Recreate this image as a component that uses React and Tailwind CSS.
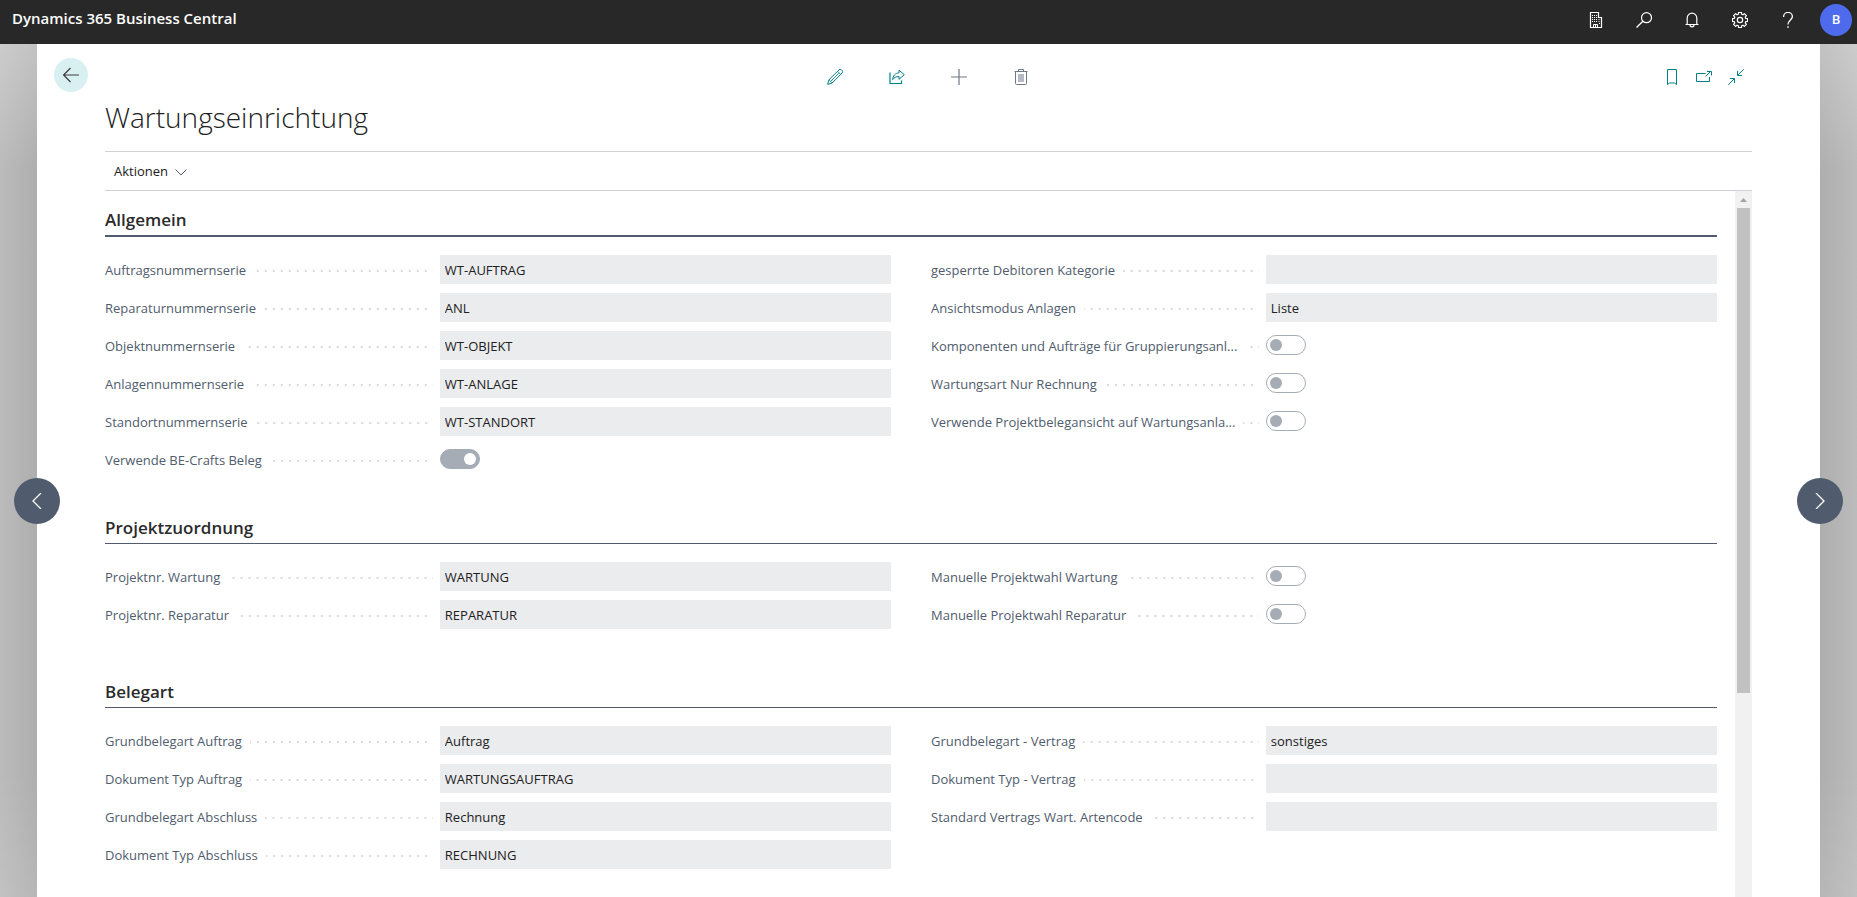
import React, { useState } from 'react';

const sections = [
  {
    title: 'Allgemein',
    headClass: 'border-b-2',
    bodyClass: 'pb-[25px]',
    left: [
      { label: 'Auftragsnummernserie', value: 'WT-AUFTRAG' },
      { label: 'Reparaturnummernserie', value: 'ANL' },
      { label: 'Objektnummernserie', value: 'WT-OBJEKT' },
      { label: 'Anlagennummernserie', value: 'WT-ANLAGE' },
      { label: 'Standortnummernserie', value: 'WT-STANDORT' },
      { label: 'Verwende BE-Crafts Beleg', toggle: true, on: true },
    ],
    right: [
      { label: 'gesperrte Debitoren Kategorie', value: '' },
      { label: 'Ansichtsmodus Anlagen', value: 'Liste' },
      { label: 'Komponenten und Aufträge für Gruppierungsanl...', toggle: true },
      { label: 'Wartungsart Nur Rechnung', toggle: true },
      { label: 'Verwende Projektbelegansicht auf Wartungsanla...', toggle: true },
    ],
  },
  {
    title: 'Projektzuordnung',
    headClass: 'border-b',
    bodyClass: 'pb-[34px]',
    left: [
      { label: 'Projektnr. Wartung', value: 'WARTUNG' },
      { label: 'Projektnr. Reparatur', value: 'REPARATUR' },
    ],
    right: [
      { label: 'Manuelle Projektwahl Wartung', toggle: true },
      { label: 'Manuelle Projektwahl Reparatur', toggle: true },
    ],
  },
  {
    title: 'Belegart',
    headClass: 'border-b',
    bodyClass: 'pb-[34px]',
    left: [
      { label: 'Grundbelegart Auftrag', value: 'Auftrag' },
      { label: 'Dokument Typ Auftrag', value: 'WARTUNGSAUFTRAG' },
      { label: 'Grundbelegart Abschluss', value: 'Rechnung' },
      { label: 'Dokument Typ Abschluss', value: 'RECHNUNG' },
    ],
    right: [
      { label: 'Grundbelegart - Vertrag', value: 'sonstiges' },
      { label: 'Dokument Typ - Vertrag', value: '' },
      { label: 'Standard Vertrags Wart. Artencode', value: '' },
    ],
  },
];

const Icon = ({ children, size = 16, className = '' }) => (
  <svg
    width={size}
    height={size}
    viewBox={`0 0 ${size} ${size}`}
    fill="none"
    stroke="currentColor"
    strokeWidth="1"
    className={className}
    aria-hidden="true"
  >
    {children}
  </svg>
);

const BuildingIcon = () => (
  <Icon>
    <path d="M2.5 15.5V.5h8v5h3v10z" strokeWidth="1.2" />
    <path d="M5.5 15.5v-3h4v3M7.5 12.5v3" />
    <path d="M4 3.5h1M6 3.5h1M8 3.5h1M4 5.5h1M6 5.5h1M8 5.5h1M4 7.5h1M6 7.5h1M8 7.5h1M10.5 7.5h1M4 9.5h1M6 9.5h1M8 9.5h1M10.5 9.5h1M11 11.5h1" strokeWidth="1.2" />
  </Icon>
);

const SearchIcon = () => (
  <Icon>
    <circle cx="10.5" cy="5.7" r="5" strokeWidth="1.2" />
    <path d="M6.9 9.3.5 15.5" strokeWidth="1.3" />
  </Icon>
);

const BellIcon = () => (
  <Icon>
    <path d="M1.5 12.5h13M3.2 12.5V6a4.8 4.8 0 0 1 9.6 0v6.5" strokeWidth="1.2" />
    <path d="M6 12.8a2 2 0 0 0 4 0" strokeWidth="1.2" />
  </Icon>
);

const gearPath = () => {
  const pts = [];
  for (let i = 0; i < 8; i++) {
    const a = (i * Math.PI) / 4;
    [[-0.27, 6], [-0.19, 7.7], [0.19, 7.7], [0.27, 6]].forEach(([d, r]) => {
      pts.push(`${(8 + r * Math.cos(a + d)).toFixed(2)} ${(8 + r * Math.sin(a + d)).toFixed(2)}`);
    });
  }
  return `M${pts.join('L')}z`;
};

const GearIcon = () => (
  <Icon>
    <path d={gearPath()} strokeWidth="1.2" strokeLinejoin="round" />
    <circle cx="8" cy="8" r="2.7" strokeWidth="1.2" />
  </Icon>
);

const HelpIcon = () => (
  <Icon>
    <path d="M3.6 5V4.5a4.3 4 0 0 1 8.8 0c0 3.3-4.4 3.7-4.4 8" strokeWidth="1.3" />
    <path d="M8 14.3v1.5" strokeWidth="1.5" />
  </Icon>
);

const PencilIcon = () => (
  <Icon>
    <path d="M.6 15.4 2 10.7 12 .9a1.8 1.8 0 0 1 2.5 0l.6.6a1.8 1.8 0 0 1 0 2.5L5.2 14z" />
    <path d="m2 10.7 3.2 3.3M10.6 2.3l3.2 3.2M3.6 12.4l8.5-8.5" strokeWidth="0.8" />
  </Icon>
);

const ShareIcon = () => (
  <Icon>
    <path d="M1 3.5v11h11.5v-3" strokeWidth="1.2" />
    <path d="M10 1.2 15.3 5.7 10 10.3V7.6C7 7.5 5 8.5 3.6 10.7 3.9 7 6 4.1 10 3.9z" strokeLinejoin="round" />
  </Icon>
);

const PlusIcon = () => (
  <Icon>
    <path d="M8 0v16M0 8h16" strokeWidth="1.2" />
  </Icon>
);

const TrashIcon = () => (
  <Icon>
    <path d="M1.5 2.5h13M5.5 2.5v-2h5v2M2.5 2.5v12a1 1 0 0 0 1 1h9a1 1 0 0 0 1-1v-12" />
    <path d="M5 5h6v8H5z" fill="currentColor" stroke="none" opacity="0.5" />
  </Icon>
);

const BookmarkIcon = () => (
  <Icon>
    <path d="M3.5.5h9v15l-2-1.5h-5l-2 1.5z" />
  </Icon>
);

const PopOutIcon = () => (
  <Icon>
    <path d="M9.5 4.5H.5v8h13V8" />
    <path d="m9.5 7.5 5-5M11 2.5h4.5v4" />
  </Icon>
);

const CollapseIcon = () => (
  <Icon>
    <path d="M15.7.3 9.7 6.3M9.5 2v4.5H14M.3 15.7l6-6M2 9.500h4.500V14" />
  </Icon>
);

const IconButton = ({ label, className, children }) => (
  <button type="button" aria-label={label} className={`flex items-center justify-center ${className}`}>
    {children}
  </button>
);

const TopBar = () => (
  <header className="flex h-11 shrink-0 items-start justify-between bg-[#282828] text-white">
    <a href="#" className="pt-[7px] pl-3 text-[15px] leading-[22px] font-semibold">
      Dynamics 365 Business Central
    </a>
    <div className="flex items-center pt-1 pr-[5px]">
      <IconButton label="Umgebung" className="h-8 w-12"><BuildingIcon /></IconButton>
      <IconButton label="Suchen" className="h-8 w-12"><SearchIcon /></IconButton>
      <IconButton label="Benachrichtigungen" className="h-8 w-12"><BellIcon /></IconButton>
      <IconButton label="Einstellungen" className="h-8 w-12"><GearIcon /></IconButton>
      <IconButton label="Hilfe" className="h-8 w-12"><HelpIcon /></IconButton>
      <button type="button" className="ml-2 h-8 w-8 rounded-full bg-[#4f6bed] text-[13px] font-semibold">
        B
      </button>
    </div>
  </header>
);

const Toggle = ({ id, initial }) => {
  const [on, setOn] = useState(initial);
  return (
    <span className="relative block h-5 w-10">
      <input
        id={id}
        type="checkbox"
        role="switch"
        checked={on}
        onChange={() => setOn(!on)}
        className="peer block h-5 w-10 appearance-none rounded-full border border-[#a6acb6] bg-white checked:bg-[#a6acb6]"
      />
      <span className="pointer-events-none absolute top-1 left-1 h-3 w-3 rounded-full bg-[#a6acb6] peer-checked:left-6 peer-checked:bg-white" />
    </span>
  );
};

const Field = ({ id, field }) => (
  <div className="flex h-[29px]">
    <div className="flex w-[42.6%] shrink-0 items-center pr-[7px]">
      <label htmlFor={id} className="truncate pr-2 text-[13px] leading-5 text-[#505c6d]">
        {field.label}
      </label>
      <span className="mt-[3px] h-[2px] min-w-2 flex-1 bg-[linear-gradient(to_right,#d8dadd_2px,transparent_2px)] bg-[length:8px_2px] bg-right bg-repeat-x" />
    </div>
    {field.toggle ? (
      <div className="pt-1">
        <Toggle id={id} initial={!!field.on} />
      </div>
    ) : (
      <input
        id={id}
        type="text"
        readOnly
        defaultValue={field.value}
        className="h-full min-w-0 flex-1 bg-[#ebecee] px-[5px] text-[13px] text-[#212121] outline-none"
      />
    )}
  </div>
);

const Section = ({ section, index }) => (
  <section>
    <h2 className={`border-[#505c6d] pt-[17px] pb-[3px] text-[17px] leading-6 font-semibold text-[#2b2b2b] ${section.headClass}`}>
      {section.title}
    </h2>
    <div className={`grid grid-cols-2 gap-x-10 pt-[18px] ${section.bodyClass}`}>
      {['left', 'right'].map((side) => (
        <div key={side} className="flex flex-col gap-[9px]">
          {section[side].map((field, i) => (
            <Field key={field.label} id={`f-${index}-${side}-${i}`} field={field} />
          ))}
        </div>
      ))}
    </div>
  </section>
);

const Scrollbar = () => (
  <div className="flex w-[17px] shrink-0 flex-col items-center bg-[#f1f1f1]">
    <div className="flex h-[17px] shrink-0 items-center">
      <svg width="7" height="4" viewBox="0 0 7 4" aria-hidden="true">
        <path d="M3.5 0 7 4H0z" fill="#a3a3a3" />
      </svg>
    </div>
    <div className="h-[68.7%] w-[13px] bg-[#c1c1c1]" />
  </div>
);

const App = () => {
  return (
    <div className="flex h-screen flex-col overflow-hidden bg-[#b8b8b8] font-['Open_Sans','Noto_Sans',sans-serif]">
      <TopBar />

      <div className="flex min-h-0 flex-1">
        <div className="w-[37px] shrink-0 bg-[linear-gradient(to_bottom,rgba(255,255,255,0.25),transparent_15%,transparent_85%,rgba(255,255,255,0.1)),linear-gradient(to_right,#bbbbbb,#aeaeae)]" />

        <main className="relative flex min-w-0 flex-1 flex-col bg-white">
          <div className="flex h-[58px] shrink-0 items-start justify-between pt-[14px] pl-[17px]">
            <IconButton label="Zurück" className="h-[34px] w-[34px] rounded-full bg-[#d9f0f2] text-[#3b3b3b]">
              <Icon>
                <path d="M0 8h16M7.5 1 .6 8l6.9 7" strokeWidth="1.2" />
              </Icon>
            </IconButton>
            <div className="flex items-center pt-[3px] pr-[68px] text-[#008089]">
              <IconButton label="Lesezeichen" className="h-8 w-8"><BookmarkIcon /></IconButton>
              <IconButton label="In neuem Fenster öffnen" className="h-8 w-8"><PopOutIcon /></IconButton>
              <IconButton label="Verkleinern" className="h-8 w-8"><CollapseIcon /></IconButton>
            </div>
          </div>
          <div className="absolute inset-x-0 top-[17px] mx-auto flex w-[249px] text-[#008089]">
            <IconButton label="Bearbeiten" className="h-8 w-[62px]"><PencilIcon /></IconButton>
            <IconButton label="Teilen" className="h-8 w-[62px]"><ShareIcon /></IconButton>
            <IconButton label="Neu" className="h-8 w-[62px] text-[#6e7887]"><PlusIcon /></IconButton>
            <IconButton label="Löschen" className="h-8 w-[62px] text-[#6e7887]"><TrashIcon /></IconButton>
          </div>

          <div className="mx-[68px] flex min-h-0 flex-1 flex-col">
            <h1 className="h-[49px] shrink-0 text-[28px] leading-[30px] font-light text-[#212121]">Wartungseinrichtung</h1>

            <div className="flex h-10 shrink-0 items-center border-y border-[#d0d2d7] pt-[2px] pl-[9px]">
              <button type="button" className="flex items-center gap-[7px] text-[13px] text-[#212121]">
                Aktionen
                <svg width="12" height="7" viewBox="0 0 12 7" fill="none" stroke="#505c6d" aria-hidden="true">
                  <path d="m.5.5 5.5 5.5L11.5.5" />
                </svg>
              </button>
            </div>

            <div className="flex min-h-0 flex-1">
              <div className="min-w-0 flex-1 overflow-hidden pr-[18px]">
                {sections.map((section, i) => (
                  <Section key={section.title} section={section} index={i} />
                ))}
              </div>
              <Scrollbar />
            </div>
          </div>

          <IconButton label="Vorheriger" className="absolute top-[434px] -left-[23px] h-[46px] w-[46px] rounded-full bg-[#505c6d] text-white">
            <Icon><path d="M12 0 4 8l8 8" strokeWidth="1.3" /></Icon>
          </IconButton>
          <IconButton label="Nächster" className="absolute top-[434px] -right-[23px] h-[46px] w-[46px] rounded-full bg-[#505c6d] text-white">
            <Icon><path d="m4 0 8 8-8 8" strokeWidth="1.3" /></Icon>
          </IconButton>
        </main>

        <div className="w-[37px] shrink-0 bg-[linear-gradient(to_bottom,rgba(255,255,255,0.25),transparent_15%,transparent_85%,rgba(255,255,255,0.1)),linear-gradient(to_left,#bbbbbb,#aeaeae)]" />
      </div>
    </div>
  );
};

export default App;
